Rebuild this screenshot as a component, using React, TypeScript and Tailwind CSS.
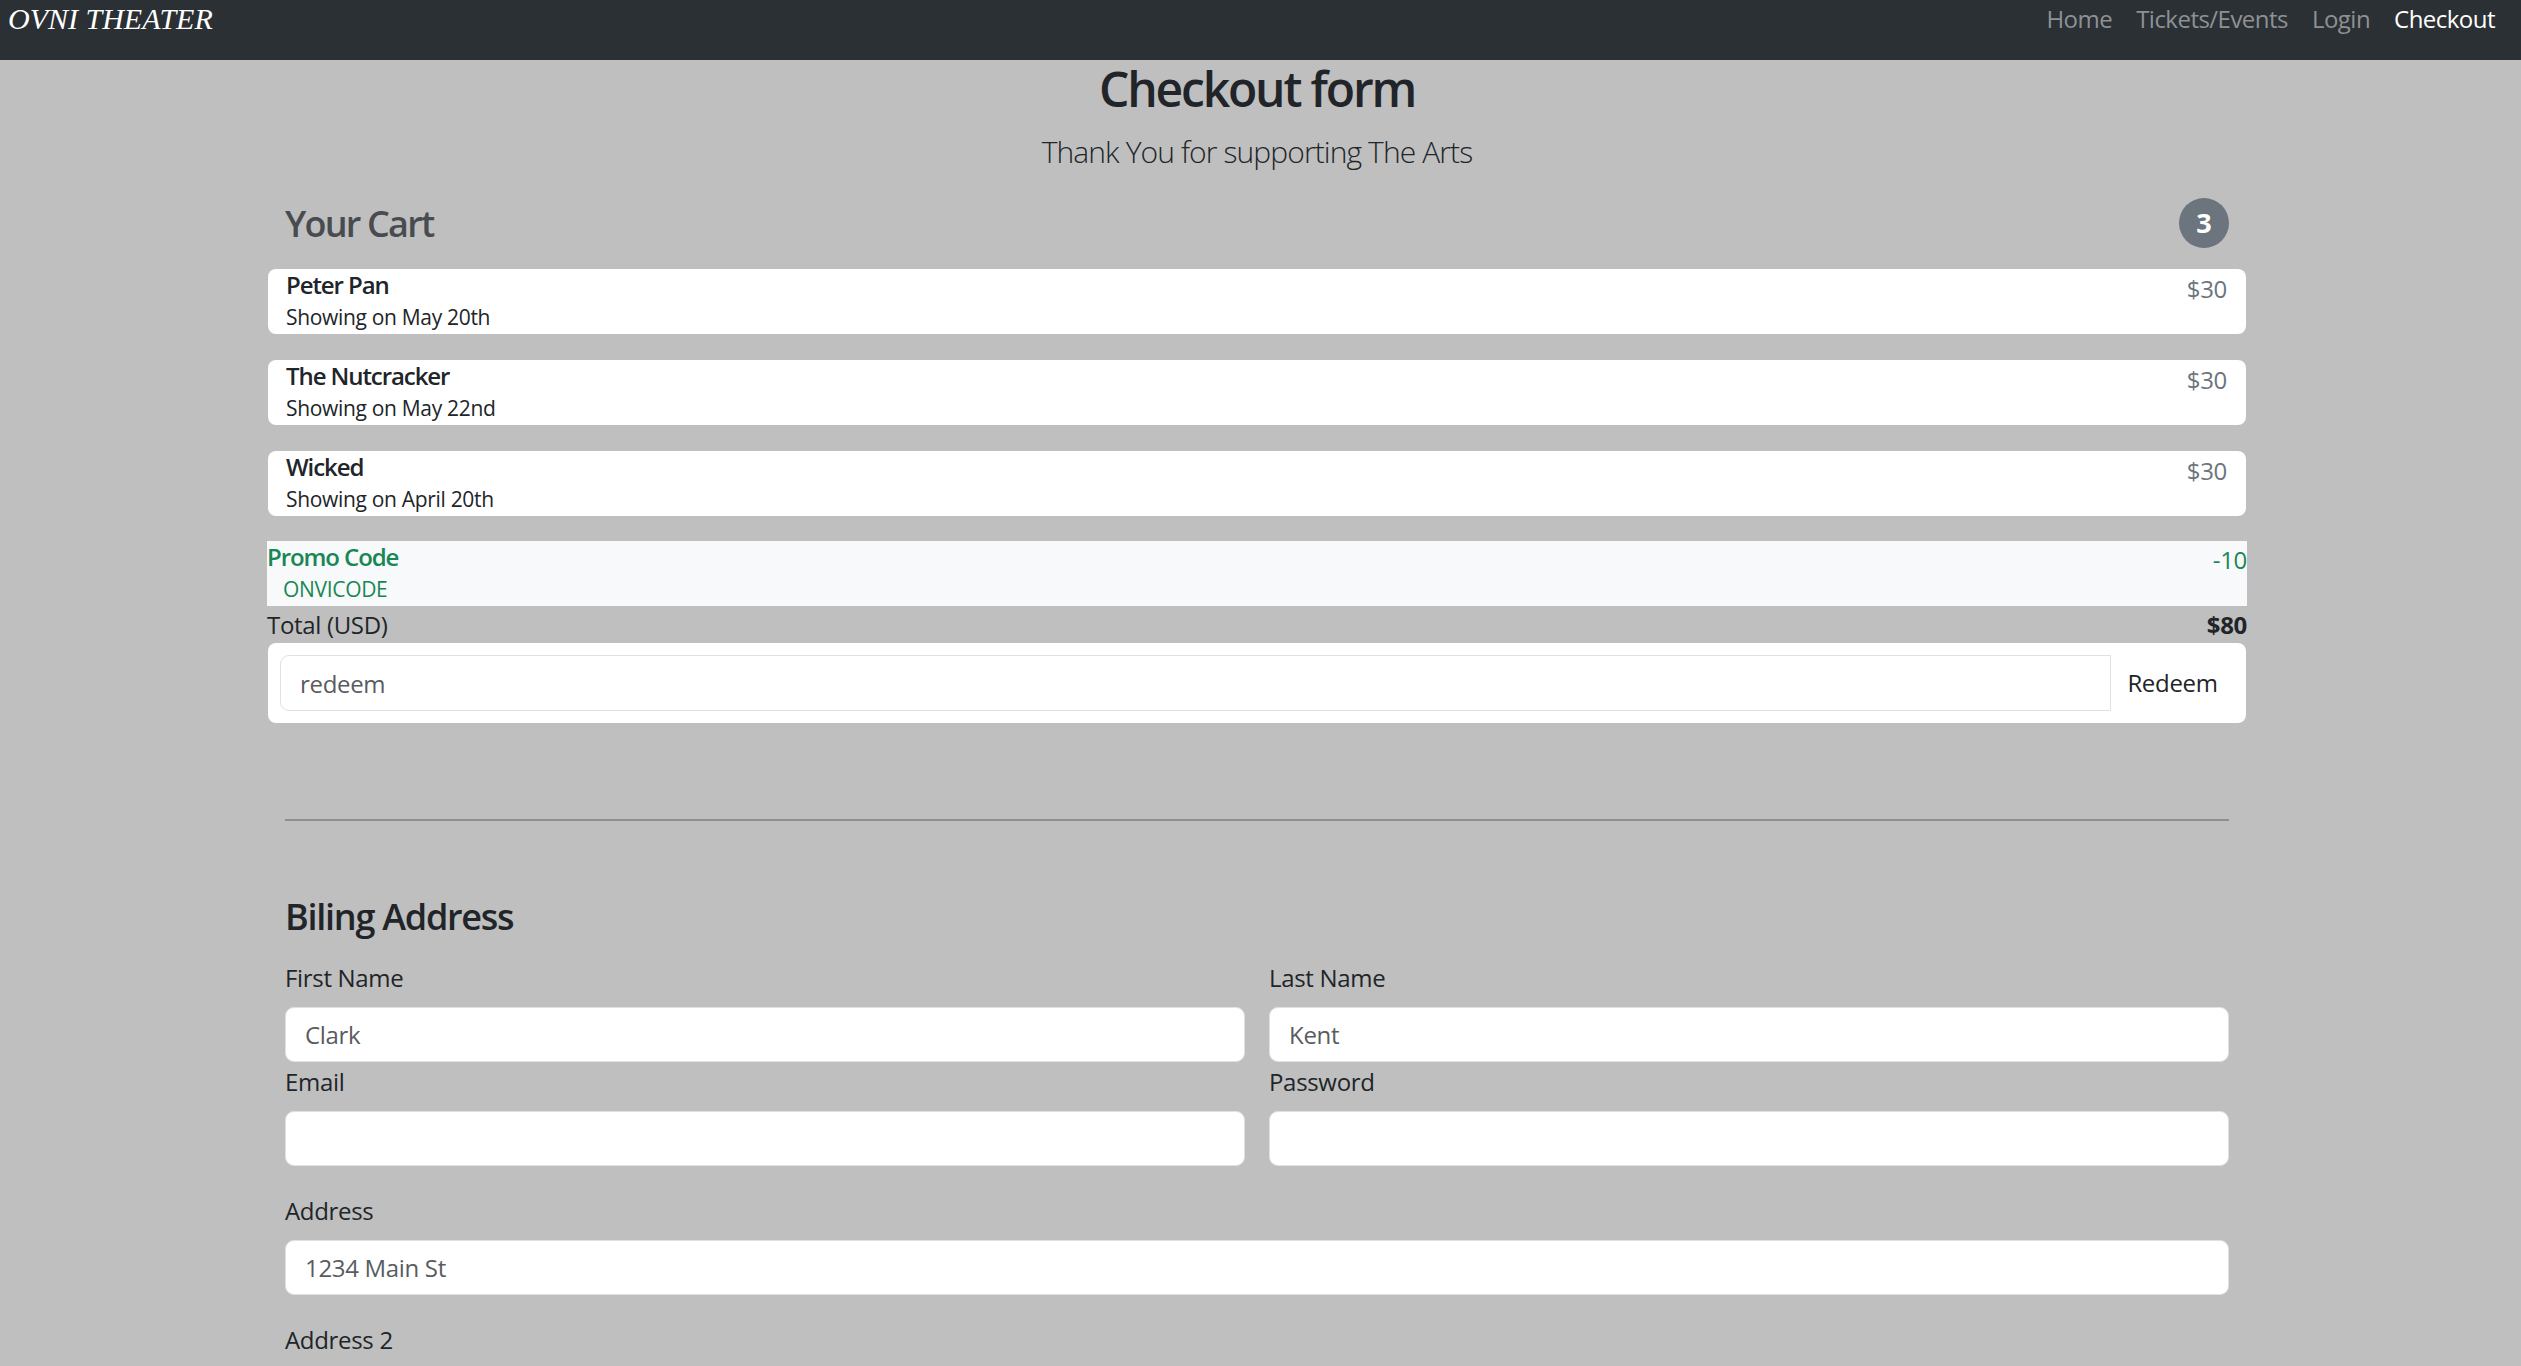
import { useState } from 'react';

type CartItem = {
  name: string;
  date: string;
  price: string;
};

const cart: CartItem[] = [
  { name: 'Peter Pan', date: 'Showing on May 20th', price: '$30' },
  { name: 'The Nutcracker', date: 'Showing on May 22nd', price: '$30' },
  { name: 'Wicked', date: 'Showing on April 20th', price: '$30' },
];

const navLinks = ['Home', 'Tickets/Events', 'Login', 'Checkout'];

function Field({
  label,
  placeholder,
  type = 'text',
  className = '',
}: {
  label: string;
  placeholder?: string;
  type?: string;
  className?: string;
}) {
  return (
    <div className={className}>
      <label className="block text-[24px] leading-[36px] text-[#212529] mb-[11px]">{label}</label>
      <input
        type={type}
        placeholder={placeholder}
        className="w-full h-[55px] bg-white rounded-[9px] border border-[#dee2e6] px-[19px] text-[24px] text-[#212529] placeholder:text-[#595c5f] outline-none"
      />
    </div>
  );
}

export default function App() {
  const [promo, setPromo] = useState('');

  return (
    <div className="min-h-screen bg-[#bfbfbf] font-['Open_Sans',sans-serif] tracking-[-0.02em] text-[#212529]">
      {/* Navbar */}
      <nav className="h-[60px] bg-[#2b3035] flex justify-between items-start">
        <a className="pl-[8px] pt-[1px] font-['Liberation_Serif',serif] italic tracking-normal text-[30px] leading-[36px] text-white">
          OVNI THEATER
        </a>
        <ul className="flex pr-[14px] pt-[1px] tracking-[-0.033em]">
          {navLinks.map((link) => (
            <li key={link}>
              <a
                className={`px-[12px] text-[24px] leading-[36px] ${
                  link === 'Checkout' ? 'text-white' : 'text-[#8e9194]'
                }`}
              >
                {link}
              </a>
            </li>
          ))}
        </ul>
      </nav>

      <div className="pr-[7px]">
        <main className="w-[1980px] mx-auto">
          {/* Header */}
          <div className="text-center">
            <h2 className="text-[48px] leading-[58px] font-semibold tracking-[-0.045em]">Checkout form</h2>
            <p className="mt-[11px] text-[30px] leading-[45px] font-light tracking-[-0.03em]">
              Thank You for supporting The Arts
            </p>
          </div>

          {/* Cart */}
          <div className="mt-[24px] px-[18px] flex justify-between items-center">
            <h4 className="text-[36px] leading-[43px] font-semibold tracking-[-0.05em] text-[#484c50]">
              Your Cart
            </h4>
            <span className="w-[50px] h-[50px] rounded-full bg-[#6c757d] text-white font-bold text-[27px] tracking-normal flex items-center justify-center">
              3
            </span>
          </div>

          <ul className="mt-[21px] mx-[1px] flex flex-col gap-[26px]">
            {cart.map((item) => (
              <li
                key={item.name}
                className="h-[65px] bg-white rounded-[8px] pl-[18px] pr-[19px] flex justify-between"
              >
                <div>
                  <h6 className="pt-[1px] text-[24px] leading-[29px] font-semibold tracking-[-0.045em]">
                    {item.name}
                  </h6>
                  <small className="block mt-[3px] text-[21px] leading-[31px]">{item.date}</small>
                </div>
                <span className="pt-[5px] text-[24px] leading-[29px] text-[#6c757d]">{item.price}</span>
              </li>
            ))}
          </ul>

          <div className="mt-[25px] h-[65px] bg-[#f8f9fa] flex justify-between text-[#198754]">
            <div>
              <h6 className="pt-[1px] text-[24px] leading-[29px] font-semibold tracking-[-0.045em]">Promo Code</h6>
              <small className="block mt-[3px] pl-[16px] text-[21px] leading-[31px]">ONVICODE</small>
            </div>
            <span className="pt-[4px] text-[24px] leading-[29px]">-10</span>
          </div>

          <div className="pt-[3px] flex justify-between text-[24px] leading-[32px]">
            <span>Total (USD)</span>
            <strong className="font-bold">$80</strong>
          </div>

          <form
            className="mt-[2px] mx-[1px] bg-white rounded-[8px] p-[12px] flex"
            onSubmit={(e) => e.preventDefault()}
          >
            <input
              value={promo}
              onChange={(e) => setPromo(e.target.value)}
              placeholder="redeem"
              className="flex-1 h-[56px] rounded-l-[9px] border border-[#dee2e6] px-[19px] text-[24px] placeholder:text-[#595c5f] outline-none"
            />
            <button type="submit" className="w-[123px] h-[56px] text-[24px] text-[#212529]">
              Redeem
            </button>
          </form>

          <hr className="mt-[96px] mx-[18px] border-0 border-t-2 border-[#8e8e8e]" />

          {/* Billing */}
          <div className="px-[18px]">
            <h4 className="mt-[74px] text-[36px] leading-[43px] font-semibold tracking-[-0.035em]">
              Biling Address
            </h4>

            <div className="mt-[22px] grid grid-cols-2 gap-x-[24px] gap-y-[2px]">
              <Field label="First Name" placeholder="Clark" />
              <Field label="Last Name" placeholder="Kent" />
              <Field label="Email" type="email" />
              <Field label="Password" type="password" />
            </div>

            <Field className="mt-[27px]" label="Address" placeholder="1234 Main St" />
            <Field className="mt-[27px]" label="Address 2" placeholder="Apartment or suite" />
          </div>
        </main>
      </div>
    </div>
  );
}
